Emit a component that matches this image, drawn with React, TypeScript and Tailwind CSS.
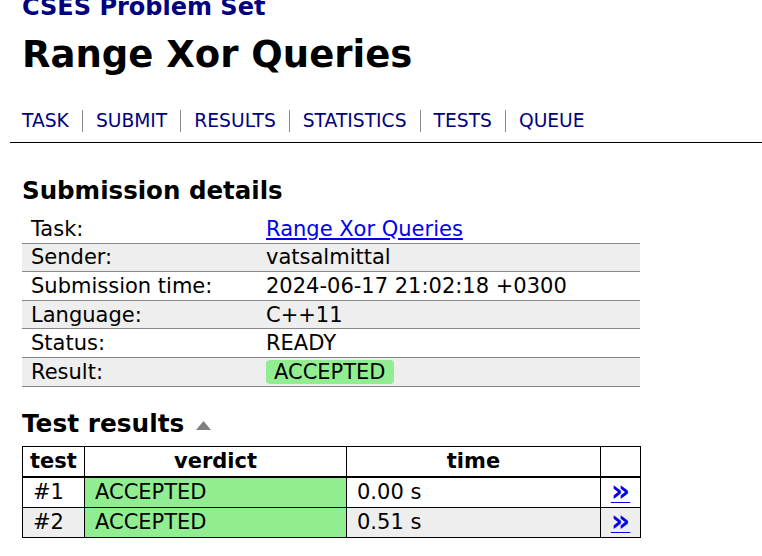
import React from "react";

const navItems = ["TASK", "SUBMIT", "RESULTS", "STATISTICS", "TESTS", "QUEUE"];

const details: { label: string; value: React.ReactNode }[] = [
  {
    label: "Task:",
    value: (
      <a href="#" className="text-[#0000ee] underline">
        Range Xor Queries
      </a>
    ),
  },
  { label: "Sender:", value: "vatsalmittal" },
  { label: "Submission time:", value: "2024-06-17 21:02:18 +0300" },
  { label: "Language:", value: "C++11" },
  { label: "Status:", value: "READY" },
  {
    label: "Result:",
    value: (
      <span className="inline-block rounded-[4px] bg-[#90ee90] px-[8px] leading-[24px]">
        ACCEPTED
      </span>
    ),
  },
];

const tests = [
  { id: 1, verdict: "ACCEPTED", time: "0.00 s" },
  { id: 2, verdict: "ACCEPTED", time: "0.51 s" },
];

export default function App() {
  return (
    <div className="min-h-screen overflow-hidden bg-white font-['DejaVu_Sans',Verdana,sans-serif] text-[21px] text-black">
      <div className="px-[22px]">
        <a href="#" className="-mt-[7px] block text-[24px] font-bold leading-[28px] text-[#000080]">
          CSES Problem Set
        </a>
        <h1 className="mt-[11px] text-[37px] font-bold leading-[46px]">Range Xor Queries</h1>
      </div>

      <div className="mt-[31px] flex items-center px-[22px]">
        {navItems.map((item, i) => (
          <React.Fragment key={item}>
            {i > 0 && <span className="mx-[13px] h-[22px] w-px bg-[#888]" />}
            <a href="#" className="text-[18.7px] leading-[24px] text-[#000080]">
              {item}
            </a>
          </React.Fragment>
        ))}
      </div>
      <div className="ml-[10px] mt-[9px] h-px bg-black" />

      <div className="px-[22px]">
        <h2 className="mt-[32.5px] text-[24.5px] font-bold leading-[30px]">Submission details</h2>
        <table className="mt-[9px] w-[618px] border-collapse">
          <tbody>
            {details.map((row, i) => (
              <tr key={row.label} className={`border-b border-[#888] ${i % 2 === 1 ? "bg-[#eee]" : ""}`}>
                <td className="h-[28.6px] w-[235px] px-[9px] py-0 leading-[24px]">{row.label}</td>
                <td className="h-[28.6px] px-[9px] py-0 leading-[24px]">{row.value}</td>
              </tr>
            ))}
          </tbody>
        </table>

        <h2 className="mt-[22.5px] flex items-center text-[24.8px] font-bold leading-[30px]">
          Test results
          <svg width="15" height="9" viewBox="0 0 15 9" className="ml-[12px] mt-[2px]">
            <polygon points="7.5,0 15,9 0,9" fill="#808080" />
          </svg>
        </h2>
        <table className="mt-[7px] w-[618px] table-fixed border-collapse border border-black">
          <colgroup>
            <col className="w-[62px]" />
            <col className="w-[262px]" />
            <col className="w-[254px]" />
            <col className="w-[40px]" />
          </colgroup>
          <thead>
            <tr className="border-b-2 border-black">
              <th className="h-[30px] border border-black px-[6px] py-0 leading-[26px]">test</th>
              <th className="h-[30px] border border-black px-[10px] py-0 leading-[26px]">verdict</th>
              <th className="h-[30px] border border-black px-[10px] py-0 leading-[26px]">time</th>
              <th className="h-[30px] border border-black py-0"></th>
            </tr>
          </thead>
          <tbody>
            {tests.map((t, i) => (
              <tr key={t.id} className={i % 2 === 1 ? "bg-[#eee]" : ""}>
                <td className="h-[30.5px] border border-black px-[10px] py-0 leading-[26px]">#{t.id}</td>
                <td className="h-[30.5px] border border-black bg-[#90ee90] px-[10px] py-0 leading-[26px]">
                  {t.verdict}
                </td>
                <td className="h-[30.5px] border border-black px-[10px] py-0 leading-[26px]">{t.time}</td>
                <td className="h-[30.5px] border border-black py-0 text-center leading-[26px]">
                  <a href="#" className="text-[30px] font-bold leading-[26px] text-[#0000ee] underline decoration-1">
                    »
                  </a>
                </td>
              </tr>
            ))}
          </tbody>
        </table>
      </div>
    </div>
  );
}
